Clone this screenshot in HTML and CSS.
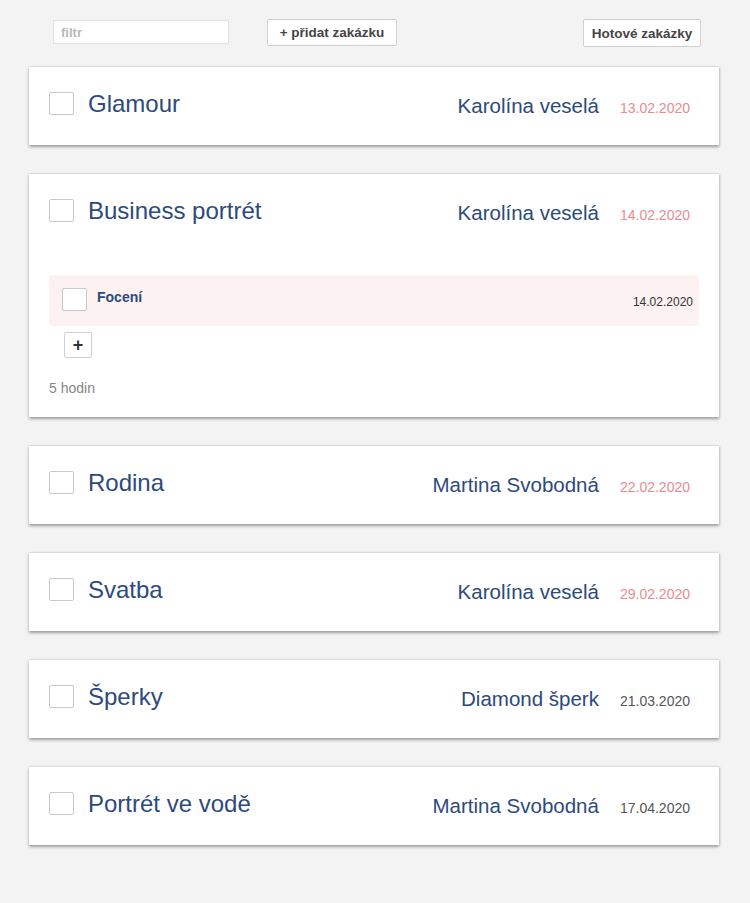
FILE: index.html
```html
<!DOCTYPE html>
<html lang="cs">
<head>
<meta charset="utf-8">
<title>Zakázky</title>
<link rel="stylesheet" href="styles.css">
</head>
<body>
<div class="page">
  <div class="toolbar">
    <input class="filter" type="text" placeholder="filtr">
    <button class="btn add">+ přidat zakázku</button>
    <button class="btn done">Hotové zakázky</button>
  </div>

  <div class="card">
    <div class="head">
      <span class="check"></span>
      <span class="title">Glamour</span>
      <span class="client">Karolína veselá</span>
      <span class="date late">13.02.2020</span>
    </div>
  </div>

  <div class="card">
    <div class="head">
      <span class="check"></span>
      <span class="title">Business portrét</span>
      <span class="client">Karolína veselá</span>
      <span class="date late">14.02.2020</span>
    </div>
    <div class="details">
      <div class="task">
        <span class="check small"></span>
        <span class="task-name">Focení</span>
        <span class="task-date">14.02.2020</span>
      </div>
      <button class="plus">+</button>
      <div class="hours">5 hodin</div>
    </div>
  </div>

  <div class="card">
    <div class="head">
      <span class="check"></span>
      <span class="title">Rodina</span>
      <span class="client">Martina Svobodná</span>
      <span class="date late">22.02.2020</span>
    </div>
  </div>

  <div class="card">
    <div class="head">
      <span class="check"></span>
      <span class="title">Svatba</span>
      <span class="client">Karolína veselá</span>
      <span class="date late">29.02.2020</span>
    </div>
  </div>

  <div class="card">
    <div class="head">
      <span class="check"></span>
      <span class="title">Šperky</span>
      <span class="client">Diamond šperk</span>
      <span class="date">21.03.2020</span>
    </div>
  </div>

  <div class="card">
    <div class="head">
      <span class="check"></span>
      <span class="title">Portrét ve vodě</span>
      <span class="client">Martina Svobodná</span>
      <span class="date">17.04.2020</span>
    </div>
  </div>
</div>
</body>
</html>
```
FILE: styles.css
```css
html, body {
  margin: 0;
  padding: 0;
  background: #f3f3f3;
  font-family: "Liberation Sans", Arial, Helvetica, sans-serif;
}

.page {
  width: 690px;
  padding: 19px 0 40px 29px;
}

.toolbar {
  display: flex;
  align-items: flex-start;
  height: 47px;
}

.filter {
  box-sizing: border-box;
  width: 176px;
  height: 24px;
  margin: 1px 0 0 24px;
  padding: 0 7px;
  border: 1px solid #e2e2e2;
  background: #fff;
  font-family: inherit;
  font-size: 13px;
  font-weight: bold;
  color: #444;
  outline: none;
}
.filter::placeholder {
  color: #b9b9b9;
}

.btn {
  box-sizing: border-box;
  height: 27px;
  padding: 0 9px;
  border: 1px solid #cfcfcf;
  border-radius: 2px;
  background: #fff;
  font-family: inherit;
  font-size: 13.5px;
  font-weight: bold;
  color: #444;
}
.add {
  width: 130px;
  margin-left: 38px;
  padding: 0 4px;
}
.done {
  width: 118px;
  height: 28px;
  margin-left: auto;
  margin-right: 18px;
  padding: 0 4px;
}

.card {
  background: #fff;
  border-top: 1px solid #dcdcdc;
  box-shadow: 0 2px 3px rgba(0, 0, 0, 0.32), 1px 1px 2px rgba(0, 0, 0, 0.08);
  padding: 23px 20px 21px 20px;
  margin-bottom: 28px;
}

.head {
  display: flex;
  align-items: flex-start;
  margin-bottom: 6px;
}

.check {
  box-sizing: border-box;
  display: block;
  width: 25px;
  height: 23px;
  border: 1px solid #c9c9c9;
  border-radius: 2px;
  background: #fff;
  flex: none;
}
.head .check {
  margin-top: 2px;
}

.title {
  flex: 1;
  margin-left: 14px;
  font-size: 24px;
  line-height: 28px;
  color: #2d4a7c;
}

.client {
  margin-top: 4px;
  font-size: 20.5px;
  line-height: 24px;
  color: #2d4a7c;
}

.date {
  margin: 10px 9px 0 21px;
  font-size: 14px;
  line-height: 16px;
  color: #555;
}
.date.late {
  color: #ec8a8f;
}

.details {
  margin-top: 50px;
}

.task {
  display: flex;
  align-items: flex-start;
  height: 51px;
  box-sizing: border-box;
  padding: 0 6px 0 13px;
  background: #fbf2f1;
  border-radius: 4px;
}
.task .check {
  margin-top: 13px;
}
.task-name {
  flex: 1;
  margin: 14px 0 0 10px;
  font-size: 14px;
  line-height: 16px;
  font-weight: bold;
  color: #2d4a7c;
}
.task-date {
  margin-top: 20px;
  font-size: 12px;
  line-height: 14px;
  color: #333;
}

.plus {
  display: block;
  box-sizing: border-box;
  width: 28px;
  height: 26px;
  margin: 6px 0 0 15px;
  padding: 0;
  border: 1px solid #cfcfcf;
  border-radius: 2px;
  background: #fff;
  font-family: inherit;
  font-size: 18px;
  line-height: 22px;
  font-weight: bold;
  color: #333;
}

.hours {
  margin-top: 22px;
  font-size: 14px;
  line-height: 16px;
  color: #888;
}
```
